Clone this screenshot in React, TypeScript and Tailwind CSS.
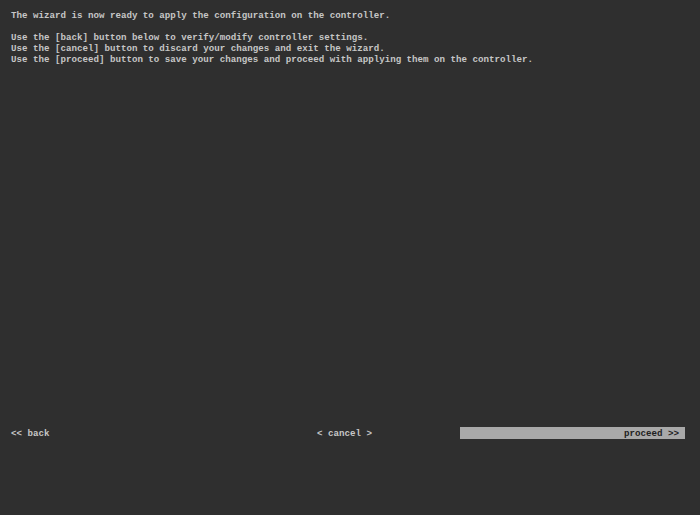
export default function App() {
  const lines = [
    "The wizard is now ready to apply the configuration on the controller.",
    "",
    "Use the [back] button below to verify/modify controller settings.",
    "Use the [cancel] button to discard your changes and exit the wizard.",
    "Use the [proceed] button to save your changes and proceed with applying them on the controller.",
  ];

  return (
    <div className="flex h-[515px] w-[700px] flex-col bg-[#2f2f2f] font-['Liberation_Mono',monospace] text-[9.16px] font-bold leading-[11px] text-[#c6c6c6]">
      <div className="pl-[11px] pt-[10px]">
        {lines.map((line, i) => (
          <div key={i} className="h-[11px] whitespace-pre">
            {line}
          </div>
        ))}
      </div>

      <div className="flex-1" />

      <div className="flex items-center pb-[76px] pl-[11px]">
        <div className="w-[306px] whitespace-pre">{"<< back"}</div>
        <div className="w-[143px] whitespace-pre">{"< cancel >"}</div>
        <div className="flex h-[12px] w-[225px] items-center justify-end bg-[#a9a9a9] pr-[6px] text-[#222222]">
          <span className="whitespace-pre">{"proceed >>"}</span>
        </div>
      </div>
    </div>
  );
}
